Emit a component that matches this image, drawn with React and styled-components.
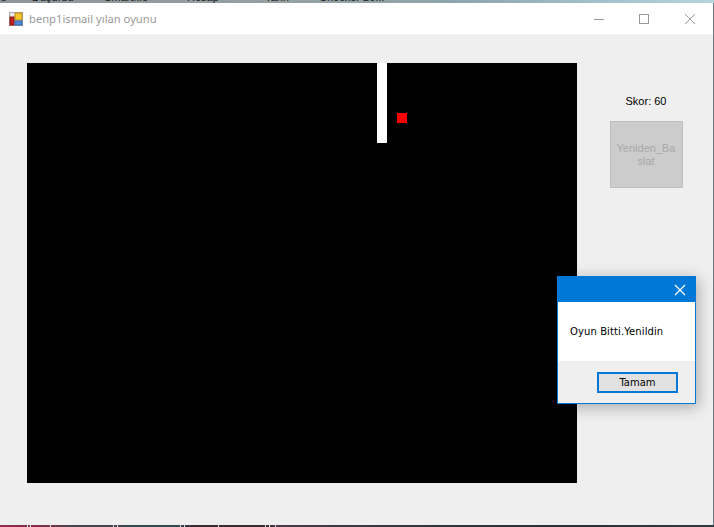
import styled, { createGlobalStyle } from 'styled-components';

const bottomTicks = [27, 30, 50, 113, 117, 180, 184, 218, 265, 269, 275]

const GlobalStyle = createGlobalStyle`
  html, body {
    margin: 0;
    padding: 0;
    background: #2d3338;
  }
`

const App = () => {
  return (
    <Desktop>
      <GlobalStyle />
      <DesktopLabels>
        <DesktopLabel $left={-2}>le</DesktopLabel>
        <DesktopLabel $left={32}>Düşürdü</DesktopLabel>
        <DesktopLabel $left={104}>Smartf.le</DesktopLabel>
        <DesktopLabel $left={187}>Hesap</DesktopLabel>
        <DesktopLabel $left={265}>Tarih</DesktopLabel>
        <DesktopLabel $left={319}>Checker 20...</DesktopLabel>
      </DesktopLabels>
      {bottomTicks.map((x) => <BottomTick key={x} $left={x} />)}
      <GameWindow>
        <TitleBar>
          <AppIcon />
          <WindowTitle>benp1ismail yılan oyunu</WindowTitle>
          <WindowButtons>
            <WindowButton aria-label='minimize'>
              <svg width='12' height='12' viewBox='0 0 12 12'>
                <path d='M0 6.5H10' stroke='#9a9a9a' strokeWidth='1' />
              </svg>
            </WindowButton>
            <WindowButton aria-label='maximize'>
              <svg width='12' height='12' viewBox='0 0 12 12'>
                <rect x='0.5' y='1.5' width='9' height='9' fill='none' stroke='#9a9a9a' />
              </svg>
            </WindowButton>
            <WindowButton aria-label='close'>
              <CloseIcon color='#9a9a9a' />
            </WindowButton>
          </WindowButtons>
        </TitleBar>
        <ClientArea>
          <Board>
            <Snake />
            <Food />
          </Board>
          <SidePanel>
            <Score>Skor: 60</Score>
            <RestartButton disabled>Yeniden_Ba<br />slat</RestartButton>
          </SidePanel>
        </ClientArea>
      </GameWindow>
      <Dialog>
        <DialogHeader>
          <DialogClose aria-label='close'>
            <CloseIcon color='#ffffff' weight={1.3} />
          </DialogClose>
        </DialogHeader>
        <DialogBody>Oyun Bitti.Yenildin</DialogBody>
        <DialogFooter>
          <OkButton>Tamam</OkButton>
        </DialogFooter>
      </Dialog>
    </Desktop>
  )
};

const CloseIcon = ({ color, weight = 1 }) => (
  <svg width='12' height='12' viewBox='0 0 12 12'>
    <path d='M1 1L11 11M11 1L1 11' stroke={color} strokeWidth={weight} />
  </svg>
)

const AppIcon = () => (
  <svg width='14' height='14' viewBox='0 0 14 14'>
    <rect x='0.5' y='0.5' width='13' height='13' fill='#e8e8e8' stroke='#a8a8a8' />
    <rect x='6' y='1' width='7' height='7' fill='#f6c62d' stroke='#b98a1c' />
    <rect x='1' y='5' width='4' height='8' fill='#c41f1f' stroke='#8a1616' />
    <rect x='6' y='9' width='7' height='4' fill='#4f8be0' stroke='#2f62a8' />
  </svg>
)

const Desktop = styled.div`
  position: relative;
  width: 714px;
  height: 527px;
  overflow: hidden;
  background: linear-gradient(90deg, #8a2f4c 0%, #7a3048 7%, #44444a 10%, #44444a 16%, #2f4a50 18%, #2f4a50 25%, #3a2a32 27%, #3a2a32 37%, #4a3a4a 39%, #3a3a42 50%, #2d3338 65%, #2b3338 85%, #2f3a40 100%);
  font-family: "Liberation Sans", Arial, sans-serif;
`

const DesktopLabels = styled.div`
  position: absolute;
  top: 0;
  left: 0;
  width: 100%;
  height: 3px;
  overflow: hidden;
  background: linear-gradient(90deg, #8d979a 0%, #95a0a3 40%, #8fa6ac 65%, #a4c3cc 85%, #b6d4dc 100%);
`

const DesktopLabel = styled.span`
  position: absolute;
  top: -10px;
  left: ${props => props.$left}px;
  font-size: 11px;
  line-height: 14px;
  color: #1b1b1b;
  white-space: nowrap;
`

const BottomTick = styled.div`
  position: absolute;
  left: ${props => props.$left}px;
  bottom: 0;
  width: 1px;
  height: 2px;
  background: #d8d8d8;
`

const GameWindow = styled.div`
  position: absolute;
  top: 3px;
  left: 0;
  width: 713px;
  height: 522px;
  display: flex;
  flex-direction: column;
  background: #efefef;
  border-right: 1px solid #6f7a80;
`

const TitleBar = styled.div`
  height: 31px;
  flex-shrink: 0;
  display: flex;
  align-items: center;
  padding-left: 9px;
  background: #ffffff;
`

const WindowTitle = styled.span`
  margin-left: 6px;
  font-family: "Noto Sans", "Open Sans", sans-serif;
  font-size: 11.2px;
  color: #9a9a9a;
`

const WindowButtons = styled.div`
  display: flex;
  margin-left: auto;
  margin-right: 1px;
`

const WindowButton = styled.button`
  width: 45px;
  height: 30px;
  padding: 0;
  display: flex;
  align-items: center;
  justify-content: center;
  border: none;
  background: transparent;
`

const ClientArea = styled.div`
  flex: 1;
  display: flex;
  align-items: flex-start;
  padding: 29px 0 0 27px;
`

const Board = styled.div`
  position: relative;
  width: 550px;
  height: 420px;
  flex-shrink: 0;
  background: #000000;
`

const Snake = styled.div`
  position: absolute;
  left: 350px;
  top: 0;
  width: 10px;
  height: 80px;
  background: #ffffff;
`

const Food = styled.div`
  position: absolute;
  left: 370px;
  top: 50px;
  width: 10px;
  height: 10px;
  background: #ff0000;
`

const SidePanel = styled.div`
  flex: 1;
  display: flex;
  flex-direction: column;
  align-items: center;
  padding-top: 31px;
  padding-left: 2px;
`

const Score = styled.div`
  font-size: 11px;
  line-height: 14px;
  color: #000000;
`

const RestartButton = styled.button`
  width: 73px;
  height: 67px;
  margin-top: 13px;
  padding: 0;
  font-family: "Liberation Sans", Arial, sans-serif;
  font-size: 11px;
  line-height: 13px;
  color: #a8a8a8;
  background: #cccccc;
  border: 1px solid #bfbfbf;
`

const Dialog = styled.div`
  position: absolute;
  left: 557px;
  top: 276px;
  width: 137px;
  height: 126px;
  display: flex;
  flex-direction: column;
  border: 1px solid #0078d7;
  background: #ffffff;
  box-shadow: 2px 3px 14px rgba(0, 0, 0, 0.3);
`

const DialogHeader = styled.div`
  height: 25px;
  display: flex;
  align-items: center;
  justify-content: flex-end;
  padding-right: 9px;
  background: #0078d7;
`

const DialogClose = styled.button`
  width: 12px;
  height: 12px;
  padding: 0;
  display: flex;
  border: none;
  background: transparent;
`

const DialogBody = styled.div`
  height: 59px;
  display: flex;
  align-items: center;
  padding-left: 12px;
  box-sizing: border-box;
  font-family: "DejaVu Sans", sans-serif;
  font-size: 10px;
  letter-spacing: 0.1px;
  color: #000000;
`

const DialogFooter = styled.div`
  flex: 1;
  display: flex;
  align-items: center;
  justify-content: flex-end;
  padding-right: 17px;
  background: #efefef;
`

const OkButton = styled.button`
  width: 81px;
  height: 21px;
  padding: 0;
  font-family: "DejaVu Sans", sans-serif;
  font-size: 10px;
  color: #000000;
  background: #e1e1e1;
  border: 2px solid #0078d7;
`

export default App;
